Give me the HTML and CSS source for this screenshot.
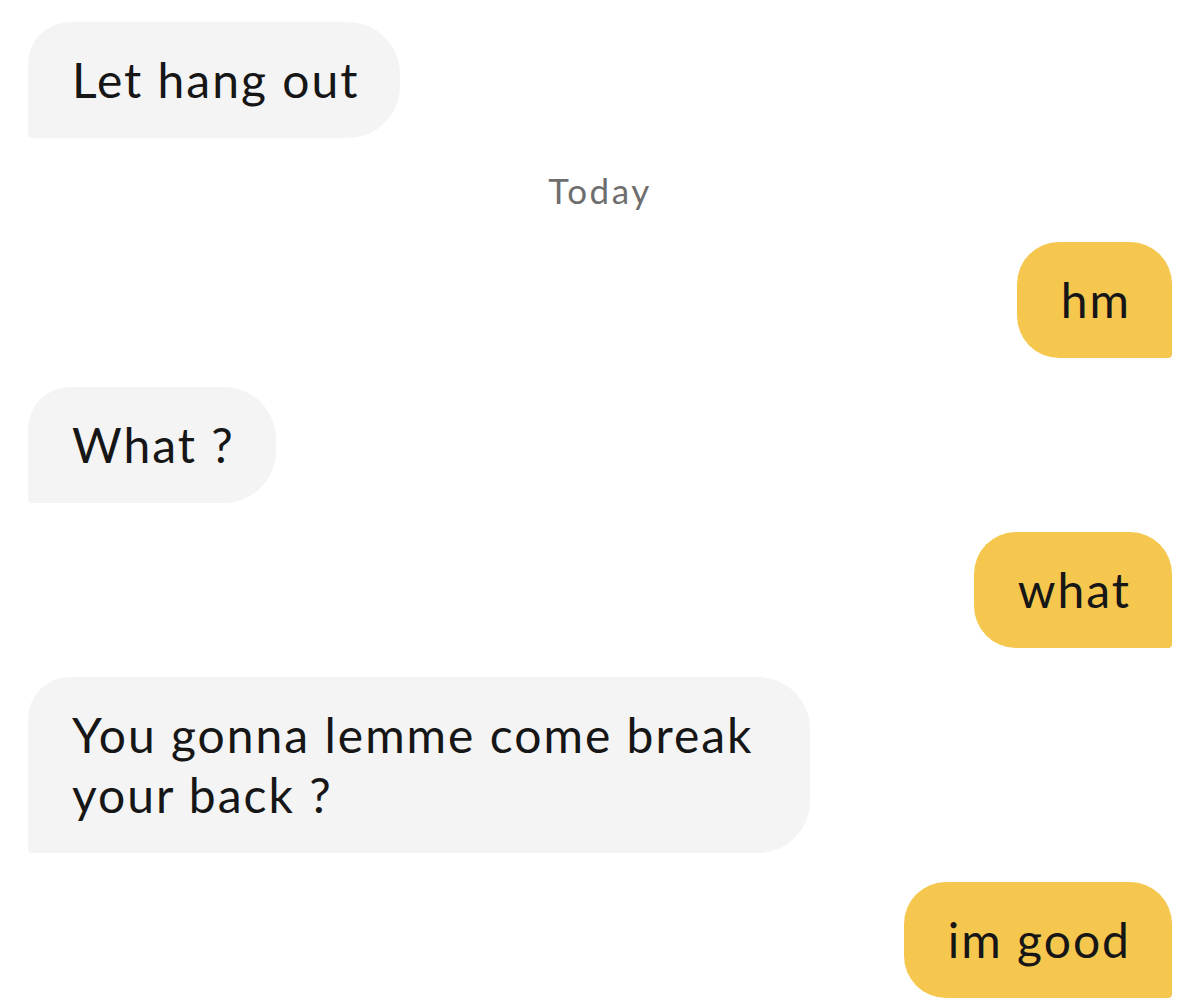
FILE: index.html
```html
<!DOCTYPE html>
<html lang="en">
<head>
<meta charset="utf-8">
<title>Chat</title>
<link rel="stylesheet" href="styles.css">
</head>
<body>
  <main class="thread">
    <div class="msg msg--in">Let hang out</div>
    <div class="day">Today</div>
    <div class="msg msg--out">hm</div>
    <div class="msg msg--in">What ?</div>
    <div class="msg msg--out">what</div>
    <div class="msg msg--in msg--wide">You gonna lemme come break your back ?</div>
    <div class="msg msg--out">im good</div>
  </main>
</body>
</html>
```

FILE: styles.css
```css
html, body {
  margin: 0;
  background: #ffffff;
}

body {
  font-family: "Lato", "Liberation Sans", sans-serif;
  color: #161616;
}

.thread {
  display: flex;
  flex-direction: column;
  gap: 29px;
  padding: 22px 28px 0 28px;
}

.msg {
  box-sizing: border-box;
  font-size: 48px;
  letter-spacing: 2px;
  line-height: 60px;
  padding: 28px 41px 28px 44px;
  max-width: 782px;
}

.msg--in {
  align-self: flex-start;
  background: #f4f4f4;
  border-radius: 42px 52px 52px 4px;
}

.msg--out {
  align-self: flex-end;
  background: #f5c74e;
  border-radius: 42px 42px 4px 42px;
}

.day {
  align-self: center;
  font-size: 35px;
  letter-spacing: 2.5px;
  line-height: 46px;
  color: #6e6e6e;
}
```
